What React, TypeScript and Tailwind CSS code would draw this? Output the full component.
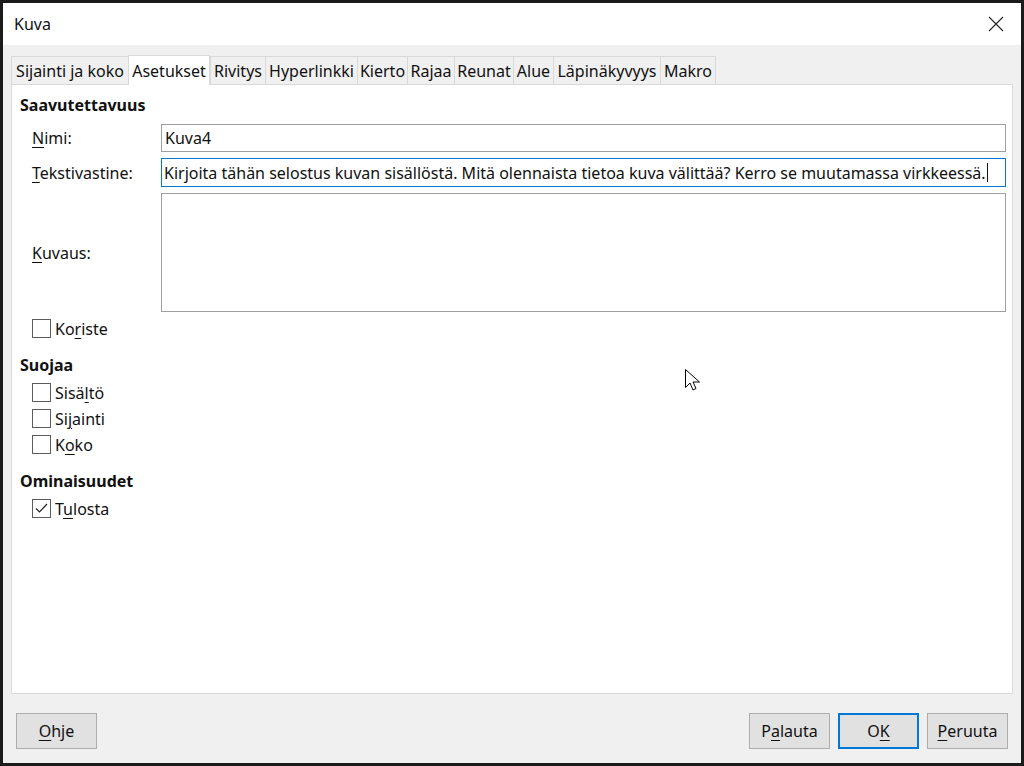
import React from "react";

const font = { fontFamily: '"Noto Sans", "Open Sans", sans-serif' };

// tab labels with measured widths from the dialog
const tabs = [
  { label: "Sijainti ja koko", w: "w-[117px]" },
  { label: "Asetukset", w: "w-[82px]", active: true },
  { label: "Rivitys", w: "w-[55px]" },
  { label: "Hyperlinkki", w: "w-[92px]" },
  { label: "Kierto", w: "w-[50px]" },
  { label: "Rajaa", w: "w-[47px]" },
  { label: "Reunat", w: "w-[59px]" },
  { label: "Alue", w: "w-[40px]" },
  { label: "Läpinäkyvyys", w: "w-[107px]" },
  { label: "Makro", w: "w-[56px]", last: true },
];

// label with one underlined mnemonic letter
function Mn({ pre, u, post }: { pre?: string; u: string; post?: string }) {
  return (
    <span>
      {pre}
      <span className="underline underline-offset-[3px] decoration-1">{u}</span>
      {post}
    </span>
  );
}

function Check({ checked, children }: { checked?: boolean; children: React.ReactNode }) {
  return (
    <div className="flex items-center h-[19px] gap-[4px]">
      <div className="w-[19px] h-[19px] border border-[#5c5c5c] bg-white flex items-center justify-center">
        {checked && (
          <svg width="15" height="15" viewBox="0 0 15 15">
            <path d="M2 7.5 L5.5 11 L13 3" fill="none" stroke="#222" strokeWidth="1.2" />
          </svg>
        )}
      </div>
      <span>{children}</span>
    </div>
  );
}

function Button({ children, primary }: { children: React.ReactNode; primary?: boolean }) {
  return (
    <button
      className={`w-[81px] h-[36px] bg-[#e1e1e1] text-[16px] text-[#111] flex items-center justify-center ${
        primary ? "border-2 border-[#0078d7]" : "border border-[#adadad]"
      }`}
    >
      {children}
    </button>
  );
}

export default function App() {
  return (
    <div
      style={font}
      className="relative w-[1024px] h-[766px] border-[3px] border-[#1b1b1b] flex flex-col text-[16px] text-[#111] overflow-hidden"
    >
      {/* Title bar */}
      <div className="h-[42px] bg-white flex items-center justify-between pl-[11px] pr-[17px] shrink-0">
        <span>Kuva</span>
        <svg width="16" height="16" viewBox="0 0 16 16">
          <path d="M1 1 L15 15 M15 1 L1 15" stroke="#222" strokeWidth="1.1" />
        </svg>
      </div>

      {/* Body */}
      <div className="flex-1 bg-[#f0f0f0] flex flex-col px-[8px]">
        {/* Tabs */}
        <div className="flex items-end h-[39px] pt-[9px] shrink-0">
          {tabs.map((t) =>
            t.active ? (
              <div
                key={t.label}
                className={`${t.w} h-[30px] bg-white border border-b-0 border-[#d9d9d9] flex items-center justify-center relative top-[1px] z-10 whitespace-nowrap`}
              >
                {t.label}
              </div>
            ) : (
              <div
                key={t.label}
                className={`${t.w} h-[28px] bg-[#f0f0f0] border-t border-l border-[#d9d9d9] ${
                  t.last ? "border-r" : ""
                } flex items-center justify-center whitespace-nowrap`}
              >
                {t.label}
              </div>
            )
          )}
        </div>

        {/* Panel */}
        <div className="w-[1002px] h-[610px] bg-white border border-[#d9d9d9] flex flex-col pl-[8px] pr-[6px] pt-[9px]">
          <div className="font-bold h-[22px] flex items-center">Saavutettavuus</div>

          <div className="flex flex-col pl-[12px] mt-[8px] gap-[6px]">
            <div className="flex items-center">
              <div className="w-[129px]">
                <Mn u="N" post="imi:" />
              </div>
              <div className="flex-1 h-[28px] border border-[#a0a0a0] flex items-center px-[3px]">Kuva4</div>
            </div>
            <div className="flex items-center">
              <div className="w-[129px]">
                <Mn u="T" post="ekstivastine:" />
              </div>
              <div className="flex-1 h-[29px] border border-[#0078d7] flex items-center px-[2px] whitespace-nowrap overflow-hidden">
                Kirjoita tähän selostus kuvan sisällöstä. Mitä olennaista tietoa kuva välittää? Kerro se muutamassa
                virkkeessä.<span className="inline-block w-px h-[19px] bg-[#111] ml-px" />
              </div>
            </div>
            <div className="flex items-center">
              <div className="w-[129px]">
                <Mn u="K" post="uvaus:" />
              </div>
              <div className="flex-1 h-[119px] border border-[#a0a0a0]" />
            </div>
          </div>

          <div className="pl-[12px] mt-[7px]">
            <Check>
              <Mn pre="Ko" u="r" post="iste" />
            </Check>
          </div>

          <div className="font-bold h-[22px] flex items-center mt-[16px]">Suojaa</div>
          <div className="pl-[12px] mt-[7px] flex flex-col gap-[7px]">
            <Check>
              <Mn pre="Sisä" u="l" post="tö" />
            </Check>
            <Check>
              <Mn pre="Si" u="j" post="ainti" />
            </Check>
            <Check>
              <Mn pre="K" u="o" post="ko" />
            </Check>
          </div>

          <div className="font-bold h-[22px] flex items-center mt-[16px]">Ominaisuudet</div>
          <div className="pl-[12px] mt-[7px]">
            <Check checked>
              <Mn pre="T" u="u" post="losta" />
            </Check>
          </div>
        </div>

        {/* Buttons */}
        <div className="flex items-center justify-between pl-[5px] pr-[5px] mt-[19px]">
          <Button>
            <Mn u="O" post="hje" />
          </Button>
          <div className="flex gap-[8px]">
            <Button>
              <Mn pre="P" u="a" post="lauta" />
            </Button>
            <Button primary>
              <Mn pre="O" u="K" />
            </Button>
            <Button>
              <Mn u="P" post="eruuta" />
            </Button>
          </div>
        </div>
      </div>

      {/* Mouse pointer */}
      <svg className="absolute left-[681px] top-[365px]" width="18" height="28" viewBox="0 0 18 28">
        <path
          d="M1.5 1.5 L1.5 19.5 L6 15 L9 22 L12 20.5 L9 14 L15.5 14 Z"
          fill="white"
          stroke="black"
          strokeWidth="1"
          strokeLinejoin="miter"
        />
      </svg>
    </div>
  );
}
